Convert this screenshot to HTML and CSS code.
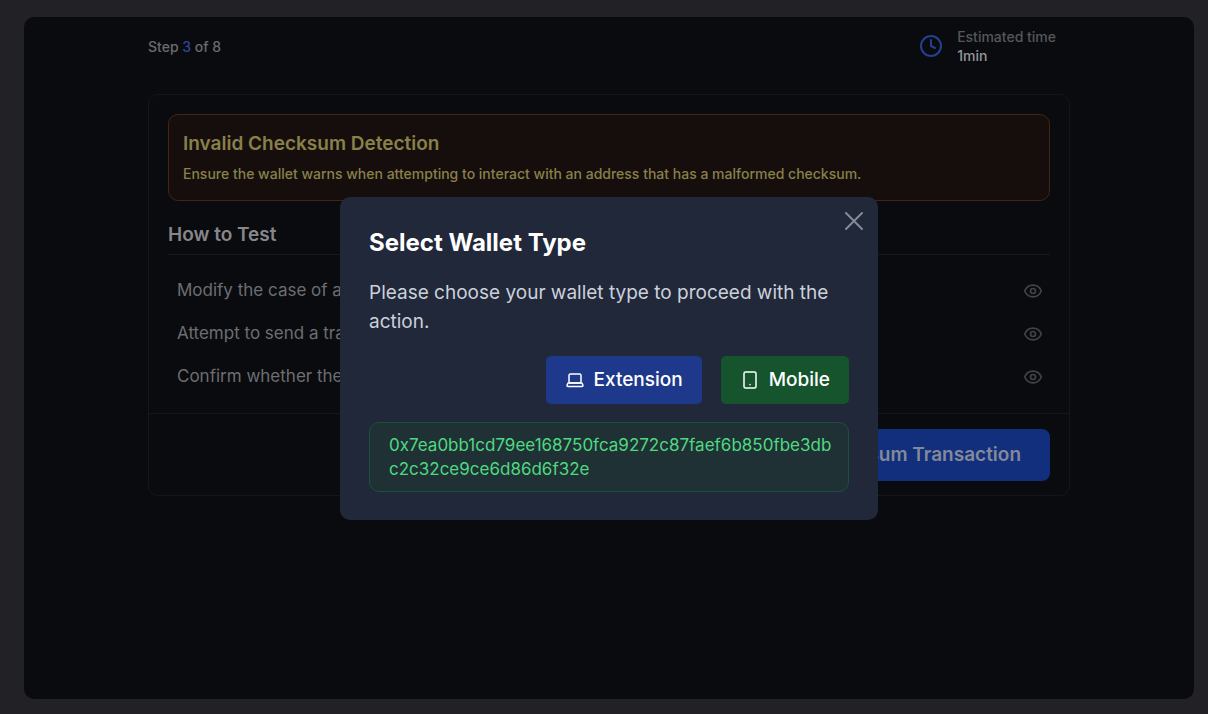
FILE: index.html
```html
<!DOCTYPE html>
<html lang="en">
<head>
    <meta charset="UTF-8">
    <meta name="viewport" content="width=device-width, initial-scale=1.0">
    <title>Invalid Checksum Detection</title>
    <link rel="stylesheet" href="styles.css">
</head>
<body>
    <div class="frame">
        <main class="content">
            <header class="top-bar">
                <p class="step">Step <span>3</span> of 8</p>
                <div class="estimate">
                    <svg class="clock" viewBox="0 0 24 24" aria-hidden="true">
                        <circle cx="12" cy="12" r="10"/>
                        <path d="M12 6v6l4 2"/>
                    </svg>
                    <div>
                        <p>Estimated time</p>
                        <p class="time">1min</p>
                    </div>
                </div>
            </header>

            <section class="card">
                <div class="card-body">
                    <div class="warning">
                        <h1>Invalid Checksum Detection</h1>
                        <p>Ensure the wallet warns when attempting to interact with an address that has a malformed checksum.</p>
                    </div>
                    <h2>How to Test</h2>
                    <ul class="steps">
                        <li>
                            <span>Modify the case of a</span>
                            <button type="button" aria-label="Show step 1">
                                <svg viewBox="0 0 24 24"><path d="M2 12C4 7.500 8 5 12 5s8 2.500 10 7c-2 4.500-6 7-10 7S4 16.500 2 12z"/><circle cx="12" cy="12" r="3"/></svg>
                            </button>
                        </li>
                        <li>
                            <span>Attempt to send a tra</span>
                            <button type="button" aria-label="Show step 2">
                                <svg viewBox="0 0 24 24"><path d="M2 12C4 7.500 8 5 12 5s8 2.500 10 7c-2 4.500-6 7-10 7S4 16.500 2 12z"/><circle cx="12" cy="12" r="3"/></svg>
                            </button>
                        </li>
                        <li>
                            <span>Confirm whether the</span>
                            <button type="button" aria-label="Show step 3">
                                <svg viewBox="0 0 24 24"><path d="M2 12C4 7.500 8 5 12 5s8 2.500 10 7c-2 4.500-6 7-10 7S4 16.500 2 12z"/><circle cx="12" cy="12" r="3"/></svg>
                            </button>
                        </li>
                    </ul>
                </div>
                <div class="card-footer">
                    <button type="button" class="send">Checksum Transaction</button>
                </div>
            </section>
        </main>

        <div class="overlay">
            <div class="modal" role="dialog" aria-labelledby="modalTitle">
                <button type="button" class="close" aria-label="Close">
                    <svg viewBox="0 0 24 24"><path d="M4 4l16 16M20 4L4 20"/></svg>
                </button>
                <h2 id="modalTitle">Select Wallet Type</h2>
                <p>Please choose your wallet type to proceed with the action.</p>
                <div class="actions">
                    <button type="button" class="extension">
                        <svg viewBox="0 0 20 20"><rect x="4" y="4" width="12" height="9" rx="1.500"/><path d="M3 13h14l1 2.500q0 1-1 1H3q-1 0-1-1z"/></svg>
                        Extension
                    </button>
                    <button type="button" class="mobile">
                        <svg viewBox="0 0 20 20"><rect x="4" y="2" width="12" height="16" rx="1.500"/><path d="M10 14.500v.2"/></svg>
                        Mobile
                    </button>
                </div>
                <div class="hash">0x7ea0bb1cd79ee168750fca9272c87faef6b850fbe3dbc2c32ce9ce6d86d6f32e</div>
            </div>
        </div>
    </div>
</body>
</html>
```
FILE: styles.css
```css
* {
    box-sizing: border-box;
}

body {
    margin: 0;
    min-height: 100vh;
    display: flex;
    padding: 17px 14px 15px 24px;
    background: #222126;
    font-family: Inter, "Liberation Sans", sans-serif;
    color: #808080;
}

h1, h2, p, ul {
    margin: 0;
    padding: 0;
}

button {
    font-family: inherit;
    border: none;
    padding: 0;
    background: none;
    cursor: pointer;
}

svg {
    display: block;
    fill: none;
    stroke: currentColor;
    stroke-width: 2;
    stroke-linecap: round;
    stroke-linejoin: round;
}

.frame {
    position: relative;
    flex: 1;
    background: #0a0b0f;
    border-radius: 10px;
}

.content {
    max-width: 922px;
    margin: 0 auto;
}

/* step counter and time */
.top-bar {
    display: flex;
    justify-content: space-between;
    align-items: center;
    padding: 10px 14px 29px 0;
    font-size: 14px;
    line-height: 19px;
    font-weight: 500;
    color: #56575a;
}

.step {
    color: #6a6b6e;
}

.step span {
    color: #2d479b;
}

.estimate {
    display: flex;
    align-items: center;
    gap: 14px;
}

.clock {
    width: 24px;
    height: 24px;
    color: #263f91;
}

.time {
    color: #96979a;
}

/* test card */
.card {
    border: 1px solid #15161a;
    border-radius: 10px;
}

.card-body {
    padding: 19px 19px 15px;
}

.warning {
    padding: 14px 14px 15px;
    border: 1px solid #47240f;
    border-radius: 10px;
    background: #150e0c;
    color: #89804a;
}

.warning h1 {
    font-size: 19px;
    line-height: 29px;
    font-weight: 600;
}

.warning p {
    margin-top: 4px;
    font-size: 14px;
    line-height: 23px;
    font-weight: 500;
}

.card-body h2 {
    margin-top: 19px;
    padding-bottom: 5px;
    border-bottom: 1px solid #17181c;
    font-size: 19px;
    line-height: 29px;
    font-weight: 600;
    color: #86878a;
}

.steps {
    margin-top: 14px;
    list-style: none;
}

.steps li {
    display: flex;
    justify-content: space-between;
    align-items: center;
    padding: 7px 7px 7px 9px;
    font-size: 17px;
    line-height: 29px;
    color: #6d6e71;
}

.steps button {
    color: #424347;
}

.steps svg {
    width: 20px;
    height: 20px;
}

.card-footer {
    display: flex;
    justify-content: flex-end;
    padding: 15px 19px 14px;
    border-top: 1px solid #15161a;
}

.send {
    padding: 12px 29px;
    border-radius: 8px;
    background: #112f7c;
    color: #84899a;
    font-size: 19px;
    line-height: 28px;
    font-weight: 600;
}

/* wallet dialog */
.overlay {
    position: absolute;
    inset: 0;
    display: flex;
    align-items: center;
    justify-content: center;
    padding-top: 1px;
}

.modal {
    position: relative;
    width: 100%;
    max-width: 538px;
    padding: 29px 29px 28px;
    border-radius: 10px;
    background: #212839;
}

.close {
    position: absolute;
    top: 12px;
    right: 12px;
    color: #858b96;
}

.close svg {
    width: 24px;
    height: 24px;
}

.modal h2 {
    font-size: 24px;
    line-height: 34px;
    font-weight: 700;
    color: #ffffff;
}

.modal p {
    margin-top: 18px;
    font-size: 19px;
    line-height: 29px;
    color: #cbd1dc;
}

.actions {
    display: flex;
    justify-content: flex-end;
    gap: 19px;
    margin-top: 20px;
}

.actions button {
    display: flex;
    align-items: center;
    gap: 9px;
    padding: 10px 19px;
    border-radius: 5px;
    color: #ffffff;
    font-size: 19px;
    line-height: 28px;
    font-weight: 500;
}

.actions svg {
    width: 20px;
    height: 20px;
    stroke-width: 1.5;
}

.extension {
    background: #1e398b;
}

.mobile {
    background: #15542d;
}

.hash {
    margin-top: 18px;
    padding: 10px 14px 10px 19px;
    border: 1px solid #195438;
    border-radius: 10px;
    background: #203135;
    color: #4ed981;
    font-size: 17px;
    line-height: 24px;
    word-break: break-all;
}
```
